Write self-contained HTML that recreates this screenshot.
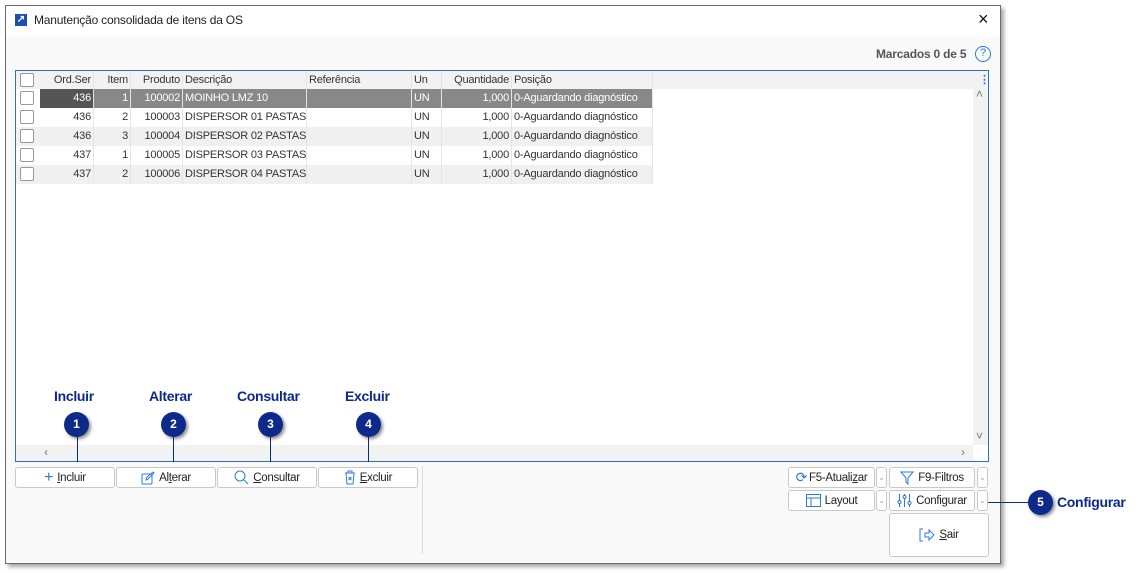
<!DOCTYPE html>
<html><head><meta charset="utf-8"><style>
*{box-sizing:border-box;margin:0;padding:0}
body{width:1145px;height:573px;background:#fff;font-family:"Liberation Sans",sans-serif;font-size:11px;color:#333;position:relative;overflow:hidden}
.win{position:absolute;left:5px;top:5px;width:996px;height:559px;background:#f9f9f9;border:1px solid #6b6b6b;box-shadow:3px 3px 4px rgba(0,0,0,.35)}
.title{position:absolute;left:0;top:0;width:100%;height:31px;background:#fff}
.abs{position:absolute}
.grid{position:absolute;left:15px;top:70px;width:974px;height:392px;border:1px solid #2a6fc9;background:#fff;overflow:hidden}
.row{position:absolute;left:0;height:19px;width:637px}
.c{position:absolute;top:0;height:19px;line-height:19px;white-space:nowrap;border-right:1px solid #e4e4e4;padding:0 2px;font-size:11px;letter-spacing:-0.2px}
.r{text-align:right}
.cb{position:absolute;left:4px;top:2px;width:14px;height:14px;border:1px solid #999;background:#fff;border-radius:2px}
.btn{position:absolute;height:21px;border:1px solid #c8c8c8;border-radius:3px;background:#fff;font-size:11.5px;color:#222;display:flex;align-items:center;justify-content:center;gap:4px;white-space:nowrap;letter-spacing:-0.3px}
.dd{position:absolute;width:11px;height:21px;border:1px solid #c8c8c8;border-radius:3px;background:#fff;color:#8aa;font-size:8px;text-align:center;line-height:20px}
.circ{position:absolute;width:25px;height:25px;border-radius:50%;background:#0d2a8a;color:#fff;font-weight:bold;font-size:12px;text-align:center;line-height:25px;box-shadow:2px 2px 3px rgba(0,0,0,.45)}
.lab{position:absolute;color:#0d2a8a;font-weight:bold;font-size:14px;letter-spacing:-0.3px}
.ln{position:absolute;background:#0d2a8a;width:1px}
</style></head><body>
<div class="win">
<div class="title">
<div class="abs" style="left:9px;top:8px;width:12px;height:12px;background:#1c4fb0;color:#fff;font-size:10px;line-height:12px;text-align:center;font-weight:bold">↗</div>
<div class="abs" style="left:28px;top:7px;font-size:12px;color:#222;letter-spacing:-0.2px">Manutenção consolidada de itens da OS</div>
<div class="abs" style="left:972px;top:3px;font-size:18px;color:#111">×</div>
</div>
<div class="abs" style="left:870px;top:41px;font-weight:bold;font-size:12px;color:#555;letter-spacing:-0.2px">Marcados 0 de 5</div>
<div class="abs" style="left:969px;top:40px;width:16px;height:16px;border:1.5px solid #2a7ae2;border-radius:50%;color:#2a7ae2;font-size:11px;text-align:center;line-height:13px">?</div>
</div>

<div class="grid">
<div class="abs" style="left:0;top:0;width:972px;height:18px;background:#f2f2f2"></div>
<div class="row" style="top:0">
<div class="cb" style="top:2px"></div>
<div class="c r" style="left:24px;width:54px">Ord.Ser</div>
<div class="c r" style="left:78px;width:37px">Item</div>
<div class="c r" style="left:115px;width:52px">Produto</div>
<div class="c" style="left:167px;width:124px">Descrição</div>
<div class="c" style="left:291px;width:105px">Referência</div>
<div class="c" style="left:396px;width:30px">Un</div>
<div class="c r" style="left:426px;width:70px">Quantidade</div>
<div class="c" style="left:496px;width:141px">Posição</div>
</div>
<div class="abs" style="left:963px;top:2px;color:#2a7ae2;font-size:11px;font-weight:bold">⋮</div>
<div class="abs" style="left:957px;top:18px;width:16px;height:356px;background:#f2f2f2"></div>
<div class="abs" style="left:960px;top:16px;color:#777;font-size:12px">˄</div>
<div class="abs" style="left:960px;top:358px;color:#777;font-size:12px">˅</div>
<div class="abs" style="left:0;top:374px;width:957px;height:16px;background:#f2f2f2"></div>
<div class="abs" style="left:28px;top:374px;color:#777;font-size:12px">‹</div>
<div class="abs" style="left:945px;top:374px;color:#777;font-size:12px">›</div>

<div class="row" style="top:18px;background:#fff">
<div class="cb"></div>
<div class="c r" style="left:24px;width:54px;background:#555;color:#fff">436</div>
<div class="c r" style="left:78px;width:37px;background:#888;color:#fff">1</div>
<div class="c r" style="left:115px;width:52px;background:#888;color:#fff">100002</div>
<div class="c" style="left:167px;width:124px;background:#888;color:#fff">MOINHO LMZ 10</div>
<div class="c" style="left:291px;width:105px;background:#888"></div>
<div class="c" style="left:396px;width:30px;background:#888;color:#fff">UN</div>
<div class="c r" style="left:426px;width:70px;background:#888;color:#fff">1,000</div>
<div class="c" style="left:496px;width:141px;background:#888;color:#fff">0-Aguardando diagnóstico</div>
</div>
<div class="row" style="top:37px;background:#fff"><div class="cb"></div>
<div class="c r" style="left:24px;width:54px">436</div><div class="c r" style="left:78px;width:37px">2</div><div class="c r" style="left:115px;width:52px">100003</div><div class="c" style="left:167px;width:124px">DISPERSOR 01 PASTAS</div><div class="c" style="left:291px;width:105px"></div><div class="c" style="left:396px;width:30px">UN</div><div class="c r" style="left:426px;width:70px">1,000</div><div class="c" style="left:496px;width:141px">0-Aguardando diagnóstico</div></div>
<div class="row" style="top:56px;background:#f0f0f0"><div class="cb"></div>
<div class="c r" style="left:24px;width:54px">436</div><div class="c r" style="left:78px;width:37px">3</div><div class="c r" style="left:115px;width:52px">100004</div><div class="c" style="left:167px;width:124px">DISPERSOR 02 PASTAS</div><div class="c" style="left:291px;width:105px"></div><div class="c" style="left:396px;width:30px">UN</div><div class="c r" style="left:426px;width:70px">1,000</div><div class="c" style="left:496px;width:141px">0-Aguardando diagnóstico</div></div>
<div class="row" style="top:75px;background:#fff"><div class="cb"></div>
<div class="c r" style="left:24px;width:54px">437</div><div class="c r" style="left:78px;width:37px">1</div><div class="c r" style="left:115px;width:52px">100005</div><div class="c" style="left:167px;width:124px">DISPERSOR 03 PASTAS</div><div class="c" style="left:291px;width:105px"></div><div class="c" style="left:396px;width:30px">UN</div><div class="c r" style="left:426px;width:70px">1,000</div><div class="c" style="left:496px;width:141px">0-Aguardando diagnóstico</div></div>
<div class="row" style="top:94px;background:#f0f0f0"><div class="cb"></div>
<div class="c r" style="left:24px;width:54px">437</div><div class="c r" style="left:78px;width:37px">2</div><div class="c r" style="left:115px;width:52px">100006</div><div class="c" style="left:167px;width:124px">DISPERSOR 04 PASTAS</div><div class="c" style="left:291px;width:105px"></div><div class="c" style="left:396px;width:30px">UN</div><div class="c r" style="left:426px;width:70px">1,000</div><div class="c" style="left:496px;width:141px">0-Aguardando diagnóstico</div></div>
</div>

<div class="abs" style="left:422px;top:466px;width:1px;height:88px;background:#ddd"></div>

<div class="btn" style="left:15px;top:467px;width:100px"><span style="color:#2a7ae2;font-size:16px">+</span><span><u>I</u>ncluir</span></div>
<div class="btn" style="left:116px;top:467px;width:100px"><svg width="14" height="14" viewBox="0 0 14 14" fill="none" stroke="#2a7ae2"><rect x="1" y="3" width="10" height="10" rx="1"/><path d="M5 9l1-3 6-5 1 1-6 6z"/></svg><span>Al<u>t</u>erar</span></div>
<div class="btn" style="left:217px;top:467px;width:100px"><svg width="15" height="15" viewBox="0 0 15 15" fill="none" stroke="#2a7ae2"><circle cx="6" cy="6" r="5"/><path d="M10 10l4 4"/></svg><span><u>C</u>onsultar</span></div>
<div class="btn" style="left:318px;top:467px;width:100px"><svg width="12" height="15" viewBox="0 0 12 15" fill="none" stroke="#2a7ae2"><path d="M1 3h10M4 3V1h4v2M2 3l1 11h6l1-11M4.5 7l3 3M7.5 7l-3 3"/></svg><span><u>E</u>xcluir</span></div>

<div class="btn" style="left:788px;top:467px;width:87px;gap:2px"><span style="color:#2a7ae2;font-size:14px">⟳</span><span>F5-Atuali<u>z</u>ar</span></div>
<div class="dd" style="left:876px;top:467px">⌄</div>
<div class="btn" style="left:889px;top:467px;width:86px"><svg width="14" height="14" viewBox="0 0 14 14" fill="none" stroke="#2a7ae2"><path d="M1 1h12L8 7v6l-2-2V7z"/></svg><span>F9-Filtros</span></div>
<div class="dd" style="left:977px;top:467px">⌄</div>
<div class="btn" style="left:788px;top:490px;width:87px"><svg width="15" height="13" viewBox="0 0 15 13" fill="none" stroke="#2a7ae2"><rect x="0.5" y="0.5" width="14" height="12"/><path d="M0.5 4h14M5 4v9"/></svg><span>Layout</span></div>
<div class="dd" style="left:876px;top:490px">⌄</div>
<div class="btn" style="left:889px;top:490px;width:86px"><svg width="15" height="15" viewBox="0 0 15 15" fill="none" stroke="#2a7ae2"><path d="M2.5 1v13M7.5 1v13M12.5 1v13"/><circle cx="2.5" cy="9" r="1.5" fill="#fff"/><circle cx="7.5" cy="4" r="1.5" fill="#fff"/><circle cx="12.5" cy="10" r="1.5" fill="#fff"/></svg><span>Configurar</span></div>
<div class="dd" style="left:977px;top:490px">⌄</div>
<div class="btn" style="left:889px;top:513px;width:100px;height:44px"><svg width="16" height="14" viewBox="0 0 16 14" fill="none" stroke="#2a7ae2"><path d="M4 1H1v12h3M6 5h4V2l5 5-5 5V9H6z"/></svg><span><u>S</u>air</span></div>

<div class="lab" style="left:54px;top:388px">Incluir</div>
<div class="lab" style="left:149px;top:388px">Alterar</div>
<div class="lab" style="left:237px;top:388px">Consultar</div>
<div class="lab" style="left:345px;top:388px">Excluir</div>
<div class="ln" style="left:77px;top:436px;height:26px"></div>
<div class="ln" style="left:173px;top:436px;height:26px"></div>
<div class="ln" style="left:270px;top:436px;height:26px"></div>
<div class="ln" style="left:368px;top:436px;height:26px"></div>
<div class="circ" style="left:64px;top:412px">1</div>
<div class="circ" style="left:161px;top:412px">2</div>
<div class="circ" style="left:258px;top:412px">3</div>
<div class="circ" style="left:356px;top:412px">4</div>
<div class="abs" style="left:988px;top:502px;width:42px;height:1px;background:#0d2a8a"></div>
<div class="circ" style="left:1028px;top:490px">5</div>
<div class="lab" style="left:1057px;top:494px">Configurar</div>
</body></html>
